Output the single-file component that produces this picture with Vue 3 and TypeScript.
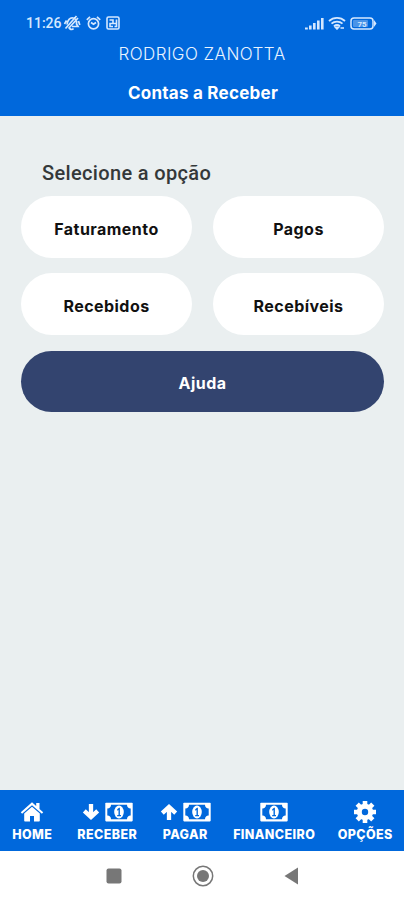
<script setup lang="ts">
interface Option {
  label: string
  name: string
}
interface Tab {
  label: string
  name: string
  icons: string[]
}

const options: Option[] = [
  { label: 'Faturamento', name: 'faturamento' },
  { label: 'Pagos', name: 'pagos' },
  { label: 'Recebidos', name: 'recebidos' },
  { label: 'Recebíveis', name: 'recebiveis' },
]

const tabs: Tab[] = [
  { label: 'HOME', name: 'home', icons: ['home'] },
  { label: 'RECEBER', name: 'receber', icons: ['down', 'money'] },
  { label: 'PAGAR', name: 'pagar', icons: ['up', 'money'] },
  { label: 'FINANCEIRO', name: 'financeiro', icons: ['money'] },
  { label: 'OPÇÕES', name: 'opcoes', icons: ['gear'] },
]
</script>

<template>
  <div class="screen">
    <header class="header">
      <div class="status">
        <div class="status-left">
          <span class="clock">11:26</span>
          <svg class="mute" width="18" height="16" viewBox="0 0 18 16" fill="none" stroke="currentColor" stroke-width="1.7">
            <path d="M4 9.500C4.500 5 7 2.500 10 3c2.500.5 4 2.500 3.500 6l1.500 2.500H9M6.500 13.500q2.500 2 4 0M2.500 13.500 13.500 1M5.500 13.500 15 3M1.500 9 3.500 5.500M16.800 10 15.500 6" />
          </svg>
          <svg class="alarm" width="15" height="16" viewBox="0 0 15 16" fill="none" stroke="currentColor" stroke-width="1.700">
            <circle cx="7.500" cy="8.700" r="5.100" />
            <path d="M.8 4.800 4 1.800M14.200 4.800 11 1.800M5 7.500l2.500 1.800L10 7.500" />
          </svg>
          <svg class="nfc" width="14" height="14" viewBox="0 0 14 14" fill="none" stroke="currentColor" stroke-width="1.600">
            <rect x="1" y="1" width="12" height="12" rx="1.500" />
            <path d="M3.500 4H7v3.500H4v3h3M7 7.500h3.500M10.500 3.500v7H8.500" />
          </svg>
        </div>
        <div class="status-right">
          <svg width="19" height="13" viewBox="0 0 19 13" fill="currentColor">
            <path d="M0 10.500h2.800v2H0zM4 8.500h2.600v4H4zM8 6h2.600v6.500H8zM12 3.500h2.600v9H12zM16 1h2.600v11.500H16z" />
          </svg>
          <svg width="18" height="14" viewBox="0 0 18 14" fill="none" stroke="currentColor" stroke-width="1.800">
            <path d="M1 5c4.500-4.200 11.500-4.200 16 0M3.500 7.700c3-2.800 8-2.800 11 0M6 10.200c1.800-1.500 4.200-1.500 6 0" />
            <path d="M7.300 11.200h3.400L9 13zM12.500 12h3.500" fill="currentColor" stroke-width="1.500" />
          </svg>
          <svg class="battery" width="27" height="13" viewBox="0 0 27 13">
            <rect x="1" y="1" width="22" height="11" rx="3" fill="none" stroke="currentColor" stroke-width="1.500" />
            <path d="M24 3 26.500 6.500l-2.500 3.500z" fill="currentColor" />
            <rect x="3" y="3" width="15" height="7" rx="1" fill="currentColor" opacity=".35" />
            <text x="12" y="9.500" text-anchor="middle" fill="currentColor">75</text>
          </svg>
        </div>
      </div>
      <div class="user">RODRIGO ZANOTTA</div>
      <h1 class="title">Contas a Receber</h1>
    </header>

    <main class="content">
      <h2 class="prompt">Selecione a opção</h2>
      <div class="options">
        <button v-for="o in options" :key="o.name" class="option" :class="o.name">{{ o.label }}</button>
        <button class="option help">Ajuda</button>
      </div>
    </main>

    <nav class="tabs">
      <a v-for="t in tabs" :key="t.name" class="tab" :class="t.name">
        <span class="icons">
          <template v-for="i in t.icons" :key="i">
            <svg v-if="i === 'home'" width="24" height="20" viewBox="0 0 24 20" fill="currentColor">
              <path d="M12 .3.800 10.200l1.300 1.500L12 3.200l9.900 8.500 1.300-1.500-3.700-3.200V1h-3.300v3z" />
              <path d="m12 4.700-7.800 6.700v7.300q0 .8.800.8h5v-5.500h4v5.500h5q.8 0 .8-.8v-7.300z" />
            </svg>
            <svg v-else-if="i === 'money'" width="28" height="20" viewBox="0 0 28 20">
              <rect x=".3" y=".8" width="27.400" height="18.600" rx=".8" fill="currentColor" />
              <path d="M6 2.800h16a3.500 3.500 0 0 0 3.700 3.700v7a3.500 3.500 0 0 0-3.700 3.700H6a3.500 3.500 0 0 0-3.700-3.700v-7A3.500 3.500 0 0 0 6 2.800z" fill="#0068dc" />
              <ellipse cx="14" cy="10" rx="4.800" ry="6.500" fill="currentColor" />
              <path d="M12.200 7.200 14 5.800h.9v7.200h1.100v1.300h-3.800V13h1.300V7.900l-1.300.8z" fill="#0068dc" />
            </svg>
            <svg v-else-if="i === 'gear'" width="24" height="24" viewBox="0 0 24 24" fill="none" stroke="currentColor">
              <circle cx="12" cy="12" r="5.700" stroke-width="5" />
              <path d="M12 1v4M12 19v4M1 12h4M19 12h4M4.200 4.200l3 3M16.800 16.800l3 3M4.200 19.800l3-3M16.800 7.200l3-3" stroke-width="4.600" />
            </svg>
            <svg v-else class="arrow" :class="i" width="18" height="18" viewBox="0 0 18 18" fill="none" stroke="currentColor" stroke-width="4.300">
              <path d="M9 1v12M2.300 7.800 9 14l6.700-6.200" />
            </svg>
          </template>
        </span>
        <span class="label">{{ t.label }}</span>
      </a>
    </nav>

    <footer class="system">
      <svg width="16" height="16" viewBox="0 0 16 16"><rect x=".5" y=".5" width="15" height="15" rx="2" fill="#777" /></svg>
      <svg width="22" height="22" viewBox="0 0 22 22">
        <circle cx="11" cy="11" r="9.700" fill="none" stroke="#777" stroke-width="1.500" />
        <circle cx="11" cy="11" r="6" fill="#777" />
      </svg>
      <svg width="15" height="18" viewBox="0 0 15 18"><path d="M14 .5v17L.5 9z" fill="#777" /></svg>
    </footer>
  </div>
</template>

<style>
body {
  margin: 0;
}
</style>

<style scoped>
.screen {
  width: 404px;
  height: 900px;
  display: flex;
  flex-direction: column;
  overflow: hidden;
  background: #eaeff0;
  font-family: Inter, sans-serif;
}
svg {
  display: block;
  flex: none;
}
.header {
  box-sizing: border-box;
  height: 116px;
  flex: none;
  background: #0068dc;
  color: #fff;
  text-align: center;
}
.status {
  display: flex;
  justify-content: space-between;
  align-items: center;
  height: 39px;
  padding: 7px 27px 0 26px;
  box-sizing: border-box;
  color: #d5e8ff;
}
.status-left,
.status-right {
  display: flex;
  align-items: center;
}
.status-right {
  gap: 4px;
}
.clock {
  font: 500 14px Roboto, sans-serif;
  width: 36px;
  text-align: left;
  margin-right: 2px;
}
.mute {
  margin-left: -1px;
}
.alarm {
  margin: 0 5px 0 5px;
}
.battery text {
  font: 700 8px Roboto, sans-serif;
}
.user {
  height: 30px;
  line-height: 31px;
  font-size: 17px;
  font-weight: 300;
  letter-spacing: 0.45px;
  color: #e9f3ff;
}
.title {
  margin: 7px 0 0;
  height: 34px;
  line-height: 34px;
  font-size: 17px;
  font-weight: 700;
  letter-spacing: 0.25px;
  text-indent: 2px;
}
.content {
  flex: 1;
  padding: 44px 20px 0 21px;
}
.prompt {
  margin: 0 0 9px 21px;
  font: 500 20px/27px Roboto, sans-serif;
  letter-spacing: 0.35px;
  color: #343839;
}
.options {
  display: grid;
  grid-template-columns: 1fr 1fr;
  grid-template-rows: 62px 62px 62px;
  gap: 15px 21px;
}
.option {
  border: 0;
  padding: 3px 0 0;
  border-radius: 31px;
  background: #fff;
  color: #111;
  font: 700 16px/20px Inter, sans-serif;
  letter-spacing: 0.45px;
}
.help {
  grid-column: 1 / -1;
  margin-top: 1px;
  background: #33446f;
  color: #fff;
}
.tabs {
  height: 61px;
  flex: none;
  box-sizing: border-box;
  padding: 9px 7px 0 7px;
  display: grid;
  grid-template-columns: 50px 100px 56px 122px 60px;
  background: #0068dc;
  color: #fff;
}
.tab {
  display: flex;
  flex-direction: column;
  align-items: center;
}
.icons {
  height: 25px;
  display: flex;
  align-items: center;
  gap: 5px;
}
.up {
  transform: rotate(180deg);
}
.label {
  margin-top: 3px;
  font-size: 12.5px;
  line-height: 16px;
  font-weight: 800;
  letter-spacing: 0.4px;
  margin-right: -0.4px;
  white-space: nowrap;
}
.system {
  height: 49px;
  flex: none;
  box-sizing: border-box;
  padding: 0 105px 0 106px;
  display: flex;
  align-items: center;
  justify-content: space-between;
  background: #fff;
}
</style>
